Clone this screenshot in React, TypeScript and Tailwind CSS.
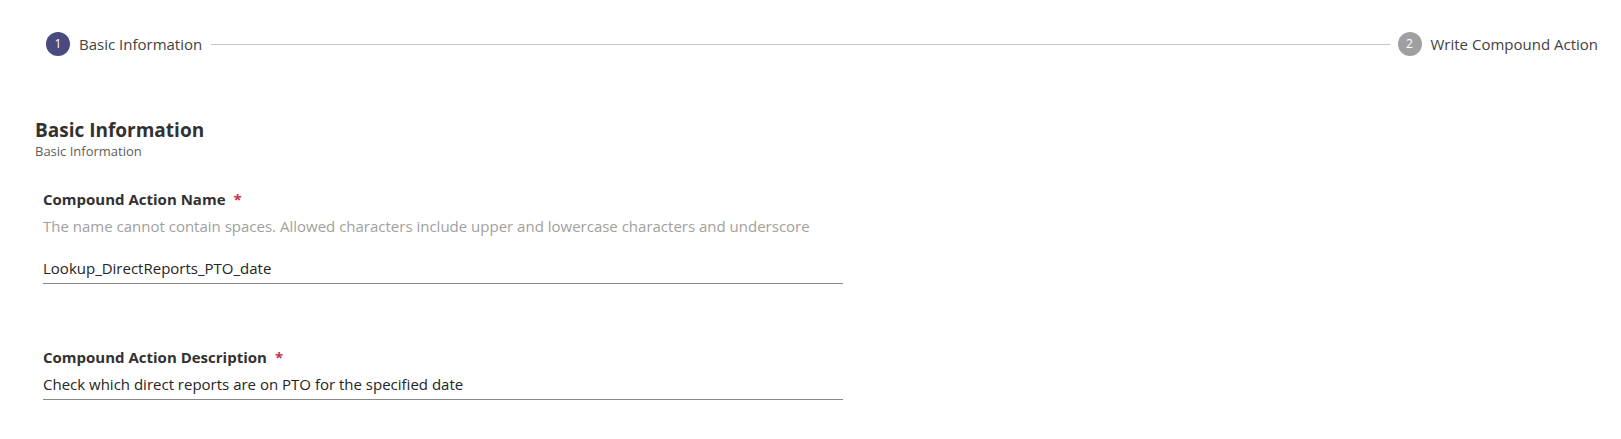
import React from 'react';

const font = { fontFamily: '"Segoe UI", "Open Sans", "Noto Sans", sans-serif' };

function Step({ n, label, active }: { n: number; label: string; active?: boolean }) {
  return (
    <div className="flex items-center gap-[9px] shrink-0">
      <div
        className={`w-6 h-6 rounded-full flex items-center justify-center text-[12px] text-white ${
          active ? 'bg-[#4a4a80]' : 'bg-[#a0a0a0]'
        }`}
      >
        {n}
      </div>
      <span className="text-[15px] text-[#424242]">{label}</span>
    </div>
  );
}

function Field({ label, help, value }: { label: string; help?: string; value: string }) {
  return (
    <div className="w-[800px]">
      <div className="flex items-center h-[22px] text-[15px] font-bold text-[#323130]">
        {label}
        <span className="ml-[8px] text-[#c4314b]">*</span>
      </div>
      {help && <p className="mt-[5px] text-[15px] leading-[22px] text-[#a19f9d]">{help}</p>}
      <div
        className={`${help ? 'mt-[15px]' : 'mt-0'} h-[32px] flex items-center border-b border-[#8a8886] text-[15px] leading-[22px] text-[#252423]`}
      >
        {value}
      </div>
    </div>
  );
}

export default function App() {
  return (
    <div className="w-[1621px] h-[439px] bg-white" style={font}>
      {/* Stepper */}
      <div className="flex items-center h-[88px] pl-[46px] pr-[23px]">
        <Step n={1} label="Basic Information" active />
        <div className="flex-1 h-px bg-[#c8c6c4] ml-[9px] mr-[8px]" />
        <Step n={2} label="Write Compound Action" />
      </div>

      <div className="pl-[35px] pt-[31px]">
        <h2 className="text-[19px] font-bold leading-[23px] text-[#323130]">Basic Information</h2>
        <p className="text-[13px] leading-[18px] text-[#605e5c]">Basic Information</p>

        <div className="pl-[8px] mt-[28px] flex flex-col gap-[62px]">
          <Field
            label="Compound Action Name"
            help="The name cannot contain spaces. Allowed characters include upper and lowercase characters and underscore"
            value="Lookup_DirectReports_PTO_date"
          />
          <Field
            label="Compound Action Description"
            value="Check which direct reports are on PTO for the specified date"
          />
        </div>
      </div>
    </div>
  );
}
